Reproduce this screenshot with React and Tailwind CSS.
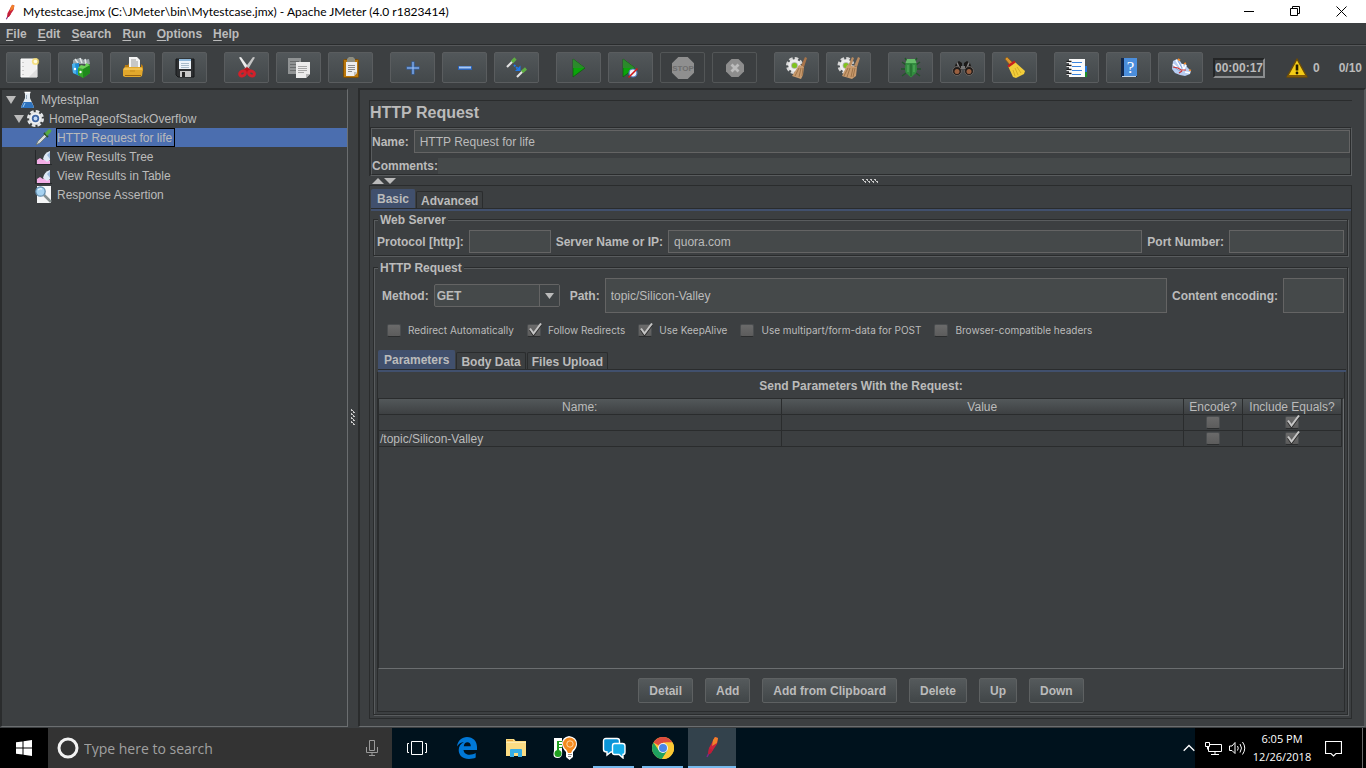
import { useState } from "react";
import clsx from "clsx";

const Svg = ({ w = 24, h = 24, children, ...rest }) => (
    <svg width={w} height={h} viewBox={`0 0 ${w} ${h}`} fill="none" className="shrink-0" aria-hidden="true" {...rest}>
        {children}
    </svg>
);

/* ---------- toolbar icons ---------- */

const NewIcon = () => (
    <Svg>
        <path d="M4 3h16v18H4z" fill="#f1f1f1" />
        <path d="M4 3h16v18H4z" stroke="#fff" />
        <path d="M6 6v1M6 10v1M6 14v1M6 18v1" stroke="#aaa" />
        <path d="M12 21l8-8v8z" fill="#dedede" />
        <circle cx="18.500" cy="5.500" r="3.600" fill="#f6dc6a" opacity=".8" />
        <circle cx="18.500" cy="5.500" r="1.800" fill="#fffbe0" />
    </Svg>
);

const TemplatesIcon = () => (
    <Svg>
        <path d="M4 4l7-2 4 2 5-1 1 5H4z" fill="#9aa4a8" />
        <path d="M6 3l3 4M11 2l2 5M16 3l1 5" stroke="#e4e7e8" strokeWidth="1.500" />
        <path d="M3 8l7-1v13l-6-3z" fill="#1d8fd6" />
        <path d="M3 8l3-1 1 11-3-1z" fill="#4fb4ee" />
        <path d="M9 12l5 1 7-4v8l-7 5-5-3z" fill="#36a82c" />
        <path d="M14 13l7-4v8l-7 5z" fill="#1f8a1c" />
        <path d="M9 12l3-3 4 1 1-3 4 2-7 4z" fill="#6bd356" />
        <circle cx="6" cy="13" r="1.200" fill="#fff" />
        <circle cx="11.500" cy="16" r="1.200" fill="#fff" />
    </Svg>
);

const OpenIcon = () => (
    <Svg>
        <path d="M8 1h8l3 3v8H8z" fill="#f4f4f4" />
        <path d="M10 4h5M10 6h7M10 8h7M10 10h7" stroke="#9a9a9a" />
        <path d="M4 9h3l1-2v5h12V8l2 2v5H3z" fill="#b77b12" />
        <path d="M2 13l2-2h17l1 2-1 7-2 1H4l-2-1z" fill="#e2a82c" />
        <path d="M3 13h18" stroke="#fbd574" />
        <path d="M4 19.500h16" stroke="#9b6510" />
        <path d="M9 15h5" stroke="#c58b1b" />
    </Svg>
);

const SaveIcon = () => (
    <Svg>
        <path d="M3 3h18v18H5l-2-2z" fill="#2d2f31" stroke="#17191a" />
        <path d="M6 3h12v10H6z" fill="#eef4fa" />
        <path d="M6 3h12v2H6z" fill="#8fb8da" />
        <path d="M8 7.500h8M8 9.500h8M8 11.500h8" stroke="#a9bccb" />
        <path d="M7 15h11v6H7z" fill="#c8c8c8" />
        <path d="M9 16h3v5H9z" fill="#252525" />
    </Svg>
);

const CutIcon = () => (
    <Svg>
        <path d="M4 1.500l2-.5 8.500 11.500-2.500 2.500z" fill="#ececec" />
        <path d="M20 1.500l-2-.5-8.500 11.500 2.500 2.500z" fill="#c4c4c4" />
        <path d="M9 13l3-2 3 2-1 4h-4z" fill="#b3161d" />
        <ellipse cx="7.500" cy="17.500" rx="3" ry="2.300" stroke="#d3202a" strokeWidth="3" transform="rotate(-30 7.500 17.500)" />
        <ellipse cx="16.500" cy="17.500" rx="3" ry="2.300" stroke="#d3202a" strokeWidth="3" transform="rotate(30 16.500 17.500)" />
    </Svg>
);

const CopyIcon = () => (
    <Svg>
        <path d="M1 2h13v16H1z" fill="#909394" />
        <path d="M3 5.500h9M3 8.500h9M3 11.500h9M3 14.500h9" stroke="#6a6d6e" />
        <path d="M9 6h14v12l-4 4H9z" fill="#ececec" />
        <path d="M11 10.500h9M11 12.500h9M11 14.500h9M11 16.500h6" stroke="#a6a6a6" />
        <path d="M23 18h-4v4z" fill="#b6b6b6" />
    </Svg>
);

const PasteIcon = () => (
    <Svg>
        <rect x="4.500" y="3.500" width="15" height="18" rx="1" fill="#b9770c" stroke="#7d4f07" />
        <path d="M7 6h11v11l-3 3H7z" fill="#ededed" />
        <path d="M9 9.500h7M9 11.500h7M9 13.500h7M9 15.500h4" stroke="#8c8c8c" />
        <path d="M18 16h-3v4z" fill="#bdbdbd" />
        <path d="M8 3l2-2h4l2 2v3H8z" fill="#8d8d80" />
    </Svg>
);

const PlusIcon = () => (
    <Svg>
        <path d="M12 5.500v13M5.500 12h13" stroke="#3267b4" strokeWidth="3" />
        <path d="M12 6v12M6 12h12" stroke="#a3c4f3" />
    </Svg>
);

const MinusIcon = () => (
    <Svg>
        <path d="M5 12h14" stroke="#2b62b5" strokeWidth="4" />
        <path d="M6 11.500h12" stroke="#a9c9f4" strokeWidth="2" />
    </Svg>
);

const ToggleIcon = () => (
    <Svg>
        <path d="M2 11l6-6" stroke="#e3e3e3" strokeWidth="2.200" />
        <path d="M7 6l3.500-3.500" stroke="#5fae42" strokeWidth="3.200" />
        <path d="M12 21l6-6" stroke="#e3e3e3" strokeWidth="2.200" />
        <path d="M17 16l4-3.500" stroke="#5fae42" strokeWidth="3" />
        <path d="M9 9l4 4" stroke="#1f78ea" strokeWidth="2" strokeDasharray="2 1" />
        <path d="M15.500 15h-5.500l5.500-5.500z" fill="#1f78ea" />
    </Svg>
);

const RunIcon = () => (
    <Svg>
        <path d="M6 3l12 9-12 9z" fill="#0aa50a" stroke="#115c11" strokeWidth=".8" />
        <path d="M6 3l12 9H6z" fill="#2b8a2b" />
    </Svg>
);

const RunNoPauseIcon = () => (
    <Svg>
        <path d="M4 3l12 9-12 9z" fill="#0aa50a" stroke="#115c11" strokeWidth=".8" />
        <path d="M4 3l12 9H4z" fill="#2b8a2b" />
        <circle cx="14" cy="17" r="4" fill="#eef2f8" stroke="#4d74b5" strokeWidth="1.200" />
        <path d="M9.500 21.500l9-9" stroke="#d01414" strokeWidth="1.600" />
    </Svg>
);

const StopIcon = () => (
    <Svg>
        <path d="M7.300 1h9.400L23 7.300v9.400L16.700 23H7.300L1 16.700V7.300z" fill="#8f8f8f" />
        <text x="12" y="15" textAnchor="middle" fontSize="8" fontWeight="bold" fontFamily="Liberation Sans Narrow, Liberation Sans, sans-serif" fill="#6e6e6e">
            STOP
        </text>
    </Svg>
);

const ShutdownIcon = () => (
    <Svg>
        <path d="M8.500 3h7L21 8.500v7L15.500 21h-7L3 15.500v-7z" fill="#8d8d8d" />
        <path d="M8.500 8.500l7 7M15.500 8.500l-7 7" stroke="#bcbcbc" strokeWidth="2.800" />
    </Svg>
);

const Cog = ({ cx, cy }) => (
    <>
        <circle cx={cx} cy={cy} r="7" stroke="#d8d8d8" strokeWidth="3" strokeDasharray="3.500 2" />
        <circle cx={cx} cy={cy} r="6.200" fill="#ededed" />
        <circle cx={cx} cy={cy} r="3.300" fill="#a9ada3" />
        <circle cx={cx} cy={cy} r="2.500" fill="#7fc41c" />
    </>
);

const ClearIcon = () => (
    <Svg>
        <Cog cx={9.5} cy={9.5} />
        <path d="M20 1l2 1-3 9-3-1z" fill="#a8744a" />
        <path d="M14 9l5 2-1 8-2 4-9-3z" fill="#c99b6e" />
        <path d="M14 12l-4 8M16 12l-2 9M18 12l-1 8" stroke="#8a6038" strokeWidth=".7" />
    </Svg>
);

const ClearAllIcon = () => (
    <Svg>
        <Cog cx={9} cy={9.5} />
        <path d="M15 1l2 1-3 9-3-1zM21 1l2 1-3 9-3-1z" fill="#b98c62" />
        <path d="M10 9l10 2-1 9-4 3-10-3z" fill="#c99b6e" />
        <path d="M11 12l-4 8M13 12l-3 9M16 12l-2 9M18 12l-2 9" stroke="#8a6038" strokeWidth=".7" />
    </Svg>
);

const BugIcon = () => (
    <Svg>
        <path d="M7 9L3 6M6 13H2M7 17l-4 3M17 9l4-3M18 13h4M17 17l4 3M8 5L6 2M16 5l2-3" stroke="#22552a" strokeWidth="1.400" />
        <path d="M7 6h10q2 7 0 11l-5 4.500L7 17q-2-4 0-11z" fill="#328c3f" />
        <path d="M8 3h8l1.500 4h-11z" fill="#66bd6a" />
        <path d="M12 8v12" stroke="#1c5f28" />
        <path d="M9 9v7M15 9v7" stroke="#58b263" />
    </Svg>
);

const SearchIcon = () => (
    <Svg>
        <path d="M5 7l3-2 3 2v9H2zM19 7l-3-2-3 2v9h9z" fill="#1c1a19" />
        <path d="M6 6.500l2 5M18 6.500l-2 5" stroke="#858585" strokeWidth="1.500" />
        <circle cx="6" cy="15" r="4.500" fill="#201c1a" stroke="#6a6562" />
        <circle cx="18" cy="15" r="4.500" fill="#201c1a" stroke="#6a6562" />
        <circle cx="6" cy="15.500" r="2.500" fill="#9a6040" />
        <circle cx="18" cy="15.500" r="2.500" fill="#9a6040" />
        <path d="M10 10h4v3h-4z" fill="#777" />
    </Svg>
);

const BroomIcon = () => (
    <Svg>
        <path d="M2 3l2-2 6 6-3 2z" fill="#d9952f" stroke="#8c5a12" strokeWidth=".7" />
        <path d="M12 6l10 9-1 3-8 4-3-1L5 10z" fill="#f2cd3a" />
        <path d="M14 11l4 6M12 12l3 7M10 14l2 6" stroke="#d1a822" strokeWidth=".9" />
        <path d="M5 10.500l7-5" stroke="#c8211d" strokeWidth="2.500" />
    </Svg>
);

const FunctionIcon = () => (
    <Svg>
        <path d="M18 10h4v6h-4z" fill="#2277dd" />
        <path d="M18 16h4v5h-4z" fill="#18902a" />
        <path d="M4 3h16v18H4z" fill="#fbfbfb" />
        <path d="M7 6.500h10M7 10.500h9M7 14.500h10M7 18.500h9" stroke="#3b84dd" />
        <path d="M1.500 5.500h5M1.500 9.500h5M1.500 13.500h5M1.500 17.500h5" stroke="#1a1a1a" strokeWidth="1.300" />
        <path d="M1.500 6.500h4M1.500 10.500h4M1.500 14.500h4M1.500 18.500h4" stroke="#e5e5e5" />
    </Svg>
);

const HelpIcon = () => (
    <Svg>
        <path d="M4 2h16v19H4z" fill="#12284c" />
        <path d="M7 2h13v18H7z" fill="#4b8edc" />
        <path d="M5 20h14v1H5z" fill="#c7d4e3" />
        <text x="13.500" y="17" textAnchor="middle" fontSize="17" fontFamily="Liberation Serif, serif" fill="#fff">
            ?
        </text>
    </Svg>
);

const FeatherWingIcon = () => (
    <Svg>
        <path d="M4 5l4-2 3 2 2 3 4 0 1 3 4 4-1 3-5 2-5-1-5-2-3-4z" fill="#b7cdf2" />
        <path d="M7 4l5 8M4 8l7 6M13 8l2 6M17 9l-3 6M16 16l5 1" stroke="#fff" strokeWidth="1.500" />
        <path d="M9 5l4 7M5 11l6 4" stroke="#7d9bd2" strokeWidth=".9" />
        <path d="M4 11l5 1 3 2 5 0M10 17l3-2" stroke="#cc3333" strokeWidth="1.200" />
        <path d="M9 3l2 1.500M15 8l2-1M20 14l2 .5" stroke="#f08a2a" strokeWidth="1.800" />
    </Svg>
);

const WarningIcon = () => (
    <Svg w={22} h={20}>
        <path d="M11 1l10 18H1z" fill="#f3cc17" stroke="#6b4b06" strokeWidth="1.500" strokeLinejoin="round" />
        <path d="M2 17h18l1 2H1z" fill="#80590a" />
        <path d="M11 6.500v6" stroke="#221a00" strokeWidth="2.600" />
        <circle cx="11" cy="15" r="1.400" fill="#221a00" />
    </Svg>
);

/* ---------- tree icons ---------- */

const FlaskIcon = () => (
    <Svg w={17} h={19}>
        <path d="M6 3h5v5l4 9q0 1-2 1H4q-2 0-2-1l4-9z" fill="#e3ebf3" />
        <path d="M4.500 12h8l2.500 5q0 1-2 1H4q-2 0-2-1z" fill="#2d72bd" />
        <path d="M6 13l-2 4" stroke="#9ed0f7" />
        <path d="M5.500 2.500h6" stroke="#fff" strokeWidth="1.500" />
        <path d="M7.500 5v4" stroke="#94a7b8" />
    </Svg>
);

const GearIcon = () => (
    <Svg w={17} h={19}>
        <circle cx="8.500" cy="9.500" r="7" stroke="#e6e8ea" strokeWidth="3" strokeDasharray="3.500 2" />
        <circle cx="8.500" cy="9.500" r="6" fill="#f0f1f2" stroke="#d8dadc" />
        <circle cx="8.500" cy="9.500" r="3.700" fill="#3e64a2" />
        <circle cx="8.500" cy="9.500" r="1.900" fill="#c4d9f5" />
    </Svg>
);

const SamplerIcon = () => (
    <Svg w={17} h={19}>
        <path d="M1 17l2-4 7-7 2 2-7 7z" fill="#d7dbd8" stroke="#5f6a60" strokeWidth=".7" />
        <path d="M9 5l4 4" stroke="#2d4f24" strokeWidth="1.800" />
        <path d="M10 5l4-4 2.500 1-.5 2-4 4z" fill="#56a940" />
    </Svg>
);

const ListenerIcon = () => (
    <Svg w={17} h={19}>
        <path d="M.5 3v14.500H17" stroke="#26282a" />
        <path d="M2 17v-4l3-2 3 2 3-2 4 3v3z" fill="#f3aee6" />
        <path d="M8 12q1-6 7-8v9l-3 2z" fill="#dfe9f5" />
        <path d="M12 8l3-3v7z" fill="#9eb9dc" />
    </Svg>
);

const AssertionIcon = () => (
    <Svg w={17} h={19}>
        <path d="M2 1h14v17H2z" fill="#f5f6f7" />
        <path d="M9 10l7 7" stroke="#86908f" strokeWidth="2.500" />
        <circle cx="5.500" cy="6.500" r="4.700" fill="#a6d2f0" stroke="#628cab" strokeWidth="1.200" />
        <path d="M3 5q2-2 4-1" stroke="#f2faff" />
    </Svg>
);

const Caret = ({ up, w = 10, h = 8 }) => (
    <Svg w={w} h={h}>
        <path d={up ? `M0 ${h}L${w / 2} 0L${w} ${h}z` : `M0 0H${w}L${w / 2} ${h}z`} fill="#bbbbbb" />
    </Svg>
);

const Feather = ({ w = 16, h = 22 }) => (
    <svg width={w} height={h} viewBox="0 0 16 22" fill="none" className="shrink-0" aria-hidden="true">
        <path d="M11 1l3 1-1 6-6 9-3 2 1-7z" fill="#c9233c" />
        <path d="M11 1l3 1-1 5-5 3 1-6z" fill="#f0812a" />
        <path d="M5 12l4 2-2 3-3 2z" fill="#c01c38" />
        <path d="M3 21l1.500-3" stroke="#7a2a88" strokeWidth="1.500" />
    </svg>
);

/* ---------- taskbar icons ---------- */

const WindowsIcon = () => (
    <Svg w={18} h={18}>
        <path d="M1 3.300l6.500-.9v6H1zM8.500 2.200L17 1v7.400H8.500zM1 9.600h6.500v6L1 14.700zM8.500 9.600H17V17l-8.500-1.200z" fill="#fff" />
    </Svg>
);

const TaskViewIcon = () => (
    <Svg w={22} h={16}>
        <path d="M5.500 1.500h11v13h-11zM3 3.500H1.500v9H3M19 3.500h1.500v9H19" stroke="#fff" />
    </Svg>
);

const EdgeIcon = () => (
    <Svg w={22} h={24}>
        <path
            d="M1 10.500C1.800 4.500 6 1 11 1c6 0 10 4.300 10 10v3H7.500c.3 3.200 3 4.700 6 4.700 2.400 0 4.600-.7 6.200-1.600v4.500C18 22.600 15.600 23 13 23 6.500 23 2.700 19.200 2.700 14c0-3.600 2-6.500 5.200-8C5.200 6.300 2.600 7.800 1 10.500zm6.800-.3h7c0-2.600-1.300-4-3.400-4-2 0-3.300 1.600-3.600 4z"
            fill="#0078d7"
        />
    </Svg>
);

const ExplorerIcon = () => (
    <Svg w={22} h={20}>
        <path d="M1 1h8l1.500 2H21v15H1z" fill="#fbdc83" />
        <path d="M2 2.500h6" stroke="#e8a33d" />
        <path d="M1 4.500h20" stroke="#fdeab3" />
        <path d="M5 12q0-1 1-1h10q1 0 1 1v7h-4v-4H9v4H5z" fill="#36aee6" />
    </Svg>
);

const WeatherIcon = () => (
    <Svg w={24} h={24}>
        <path d="M1 2h8v13q1 7-4.500 7T1 15z" fill="#fff" />
        <circle cx="5" cy="17.500" r="3.500" fill="#1fa01f" />
        <path d="M5 5v12" stroke="#1fa01f" strokeWidth="2" />
        <path d="M6 5.500h3M6 8.500h3M6 11.500h3" stroke="#1fa01f" />
        <path d="M16 0q8 1 8 8 0 4-4 8v5l-3.500 3L13 21v-5q-4-4-4-8 0-7 7-8z" fill="#fff" />
        <circle cx="16.500" cy="8" r="6.500" fill="#f58a1f" />
        <path d="M13 13h7l-2 4h-3z" fill="#f58a1f" />
        <circle cx="17" cy="8" r="3.200" stroke="#ffd9a8" />
        <path d="M15 18.500h4M15 20.500h3" stroke="#888" />
    </Svg>
);

const ChatIcon = () => (
    <Svg w={24} h={22}>
        <path d="M4 1.500h11q2.500 0 2.500 2.500v9q0 2-2.500 2H9l-4 3v-3q-3.500 0-3.500-2.500V4Q1.500 1.500 4 1.500z" fill="#0a93d6" stroke="#fff" strokeWidth="1.400" />
        <path d="M12.500 6.500h8q2.500 0 2.500 2.500v6q0 2.500-2 2.500v3.500l-4-3.500h-4.500q-2 0-2-2V9q0-2.500 2-2.500z" fill="#18aee8" stroke="#fff" strokeWidth="1.400" />
    </Svg>
);

const ChromeIcon = () => (
    <Svg w={22} h={22}>
        <circle cx="11" cy="11" r="11" fill="#fbc834" />
        <path d="M11 11L1.500 5.500A11 11 0 0 1 20.500 5.500H11z" fill="#dd4b3e" />
        <path d="M1.500 5.500A11 11 0 0 0 10 22l5.500-8.500L11 11 6.500 13z" fill="#1ea15f" />
        <path d="M20.500 5.500A11 11 0 0 1 10 22l5.500-8.500q1-4-2-8z" fill="#fbc834" />
        <circle cx="11" cy="11" r="5" fill="#f3f3f3" />
        <circle cx="11" cy="11" r="4" fill="#4a86e8" />
    </Svg>
);

/* ---------- data ---------- */

const MENUS = ["File", "Edit", "Search", "Run", "Options", "Help"];

const TOOLBAR = [
    [
        ["New", NewIcon],
        ["Templates", TemplatesIcon],
        ["Open", OpenIcon],
        ["Save", SaveIcon],
    ],
    [
        ["Cut", CutIcon],
        ["Copy", CopyIcon],
        ["Paste", PasteIcon],
    ],
    [
        ["Expand All", PlusIcon],
        ["Collapse All", MinusIcon],
        ["Toggle", ToggleIcon],
    ],
    [
        ["Start", RunIcon],
        ["Start no pauses", RunNoPauseIcon],
        ["Stop", StopIcon, true],
        ["Shutdown", ShutdownIcon, true],
    ],
    [
        ["Clear", ClearIcon],
        ["Clear All", ClearAllIcon],
    ],
    [
        ["Debug", BugIcon],
        ["Search", SearchIcon],
        ["Reset Search", BroomIcon],
    ],
    [
        ["Function Helper", FunctionIcon],
        ["Help", HelpIcon],
        ["What's new", FeatherWingIcon],
    ],
];

const TREE = [
    { label: "Mytestplan", icon: FlaskIcon, pad: "pl-[4px]", open: true },
    { label: "HomePageofStackOverflow", icon: GearIcon, pad: "pl-[12px]", open: true },
    { label: "HTTP Request for life", icon: SamplerIcon, pad: "pl-[20px]" },
    { label: "View Results Tree", icon: ListenerIcon, pad: "pl-[20px]" },
    { label: "View Results in Table", icon: ListenerIcon, pad: "pl-[20px]" },
    { label: "Response Assertion", icon: AssertionIcon, pad: "pl-[20px]" },
];

const OPTIONS = [
    ["Redirect Automatically", false],
    ["Follow Redirects", true],
    ["Use KeepAlive", true],
    ["Use multipart/form-data for POST", false],
    ["Browser-compatible headers", false],
];

const ROWS = [
    { name: "", value: "" },
    { name: "/topic/Silicon-Valley", value: "" },
];

/* ---------- controls ---------- */

function Check({ label, checked }) {
    const [on, setOn] = useState(checked);
    return (
        <span className="grid shrink-0">
            <input
                type="checkbox"
                aria-label={label}
                checked={on}
                onChange={() => setOn(!on)}
                className="col-start-1 row-start-1 mt-px h-[13px] w-[14px] appearance-none rounded-xs border border-[#4b4e50] border-b-[#2b2d2e] bg-linear-to-b from-[#6a6a6a] to-[#5c5c5c]"
            />
            <svg width="16" height="14" viewBox="0 0 16 14" fill="none" className="pointer-events-none col-start-1 row-start-1" aria-hidden="true">
                {on && (
                    <>
                        <path d="M3 7l3.500 5L14 2" stroke="#2a2a2a" strokeWidth="2" />
                        <path d="M3 5.500l3.500 5L14 .5" stroke="#c4c4c4" strokeWidth="2" />
                    </>
                )}
            </svg>
        </span>
    );
}

function Field({ id, label, value = "", className, height = "h-[23px]" }) {
    return (
        <>
            <label htmlFor={id} className="shrink-0 font-bold">
                {label}
            </label>
            <input id={id} defaultValue={value} className={clsx("min-w-0 border border-[#646464] bg-[#45494a] px-[5px] outline-none", height, className)} />
        </>
    );
}

function Tabs({ items }) {
    const [active, setActive] = useState(0);
    return (
        <div>
            <div role="tablist" className="flex h-[19px] items-end gap-px">
                {items.map((item, i) => (
                    <button
                        key={item}
                        role="tab"
                        aria-selected={i === active}
                        onClick={() => setActive(i)}
                        className={clsx(
                            "rounded-t-xs border border-b-0 font-bold",
                            i === active ? "h-[19px] border-[#41506d] bg-[#41506d] px-[5px]" : "h-[17px] border-[#2a2c2d] px-[4px] pt-px"
                        )}
                    >
                        {item}
                    </button>
                ))}
            </div>
            <div className="border-t border-[#2a2c2d]">
                <div className="h-[2px] bg-[#41506d]" />
            </div>
        </div>
    );
}

/* etched frame: dark line with a light one below and to the right of it */
const Group = ({ title, className, children }) => (
    <fieldset className={clsx("border border-[#2a2c2d] pl-px shadow-[inset_1px_1px_0_#595c5e,1px_1px_0_#595c5e]", className)}>
        <legend className="ml-[3px] h-[16px] bg-[#3c3f41] px-[2px] leading-[18px] font-bold">{title}</legend>
        {children}
    </fieldset>
);

const PushButton = ({ children }) => (
    <button className="h-[25px] rounded-xs border border-[#5e6162] bg-linear-to-b from-[#555a5c] to-[#414648] px-[10px] font-bold">{children}</button>
);

/* ---------- page parts ---------- */

function TitleBar() {
    return (
        <header className="flex h-[23px] items-center bg-white text-black">
            <span className="flex w-[23px] justify-center pr-[3px]">
                <Feather w={12} h={16} />
            </span>
            <h1 className="flex-1 truncate font-[Lato,sans-serif] text-[12px]">
                Mytestcase.jmx (C:\JMeter\bin\Mytestcase.jmx) - Apache JMeter (4.0 r1823414)
            </h1>
            <div className="flex items-center pr-[2px]">
                <button aria-label="Minimize" className="flex w-[46px] justify-center">
                    <Svg w={11} h={11}>
                        <path d="M0 5.500h10" stroke="#000" />
                    </Svg>
                </button>
                <button aria-label="Restore" className="flex w-[46px] justify-center">
                    <Svg w={11} h={11}>
                        <path d="M.5 2.500h7v7h-7zM2.500 2V.500h7v7H8" stroke="#000" />
                    </Svg>
                </button>
                <button aria-label="Close" className="flex w-[46px] justify-center">
                    <Svg w={11} h={11}>
                        <path d="M.5.5l10 10M10.500.5l-10 10" stroke="#000" />
                    </Svg>
                </button>
            </div>
        </header>
    );
}

function MenuBar() {
    return (
        <nav className="flex h-[22px] items-center gap-[11px] border-b border-[#2a2c2d] pl-[6px]">
            {MENUS.map((m) => (
                <button key={m} className="font-bold">
                    <span className="underline underline-offset-2">{m[0]}</span>
                    {m.slice(1)}
                </button>
            ))}
        </nav>
    );
}

function Toolbar() {
    return (
        <div className="flex items-center border-t border-[#555759] pt-[6px] pr-[4px] pb-[5px] pl-[6px]">
            <div className="mr-[10px] flex shrink-0 gap-[17px]">
                {TOOLBAR.map((group, i) => (
                    <div key={i} className="flex gap-[7px]">
                        {group.map(([label, Icon, off]) => (
                            <button
                                key={label}
                                aria-label={label}
                                disabled={off}
                                className={clsx(
                                    "flex h-[31px] w-[45px] items-center justify-center rounded-xs border",
                                    off ? "border-[#535657]" : "border-[#5a5d5f] bg-linear-to-b from-[#52575a] to-[#43484a]"
                                )}
                            >
                                <Icon />
                            </button>
                        ))}
                    </div>
                ))}
            </div>
            <span className="border-2 border-t-[#232526] border-r-[#8a8d8f] border-b-[#8a8d8f] border-l-[#232526] font-bold">00:00:17</span>
            <span className="ml-[21px] flex items-center gap-[5px] font-bold">
                <WarningIcon />0
            </span>
            <span className="ml-auto font-bold">0/10</span>
        </div>
    );
}

function Tree() {
    const [selected, setSelected] = useState(2);
    return (
        <aside className="w-[348px] shrink-0 border-t-2 border-r border-b border-l-2 border-t-[#2a2c2d] border-r-[#6b6e70] border-b-[#6b6e70] border-l-[#2a2c2d]">
            <ul role="tree">
                {TREE.map(({ label, icon: Icon, pad, open }, i) => (
                    <li
                        key={label}
                        role="treeitem"
                        aria-selected={i === selected}
                        onClick={() => setSelected(i)}
                        className={clsx("flex h-[19px] items-center", pad, i === selected && "bg-[#4b6eaf]")}
                    >
                        <span className="mr-[3px] w-[10px]">{open && <Caret />}</span>
                        <Icon />
                        <span className={clsx("ml-[4px] flex h-[19px] items-center border pr-[2px]", i === selected ? "border-black" : "border-transparent")}>
                            {label}
                        </span>
                    </li>
                ))}
            </ul>
        </aside>
    );
}

function ParameterTable() {
    return (
        <div className="flex-1 border border-t-[#2a2c2d] border-r-[#6b6e70] border-b-[#6b6e70] border-l-[#2a2c2d] pr-px">
            <table className="w-full table-fixed border-separate border-spacing-0">
                <thead>
                    <tr className="h-[16px] bg-linear-to-b from-[#53585a] to-[#3c3f41]">
                        <th className="border-r border-b border-[#2a2c2d] p-0 pt-[2px] leading-[13px] font-normal">Name:</th>
                        <th className="border-r border-b border-[#2a2c2d] p-0 pt-[2px] leading-[13px] font-normal">Value</th>
                        <th className="w-[59px] border-r border-b border-[#2a2c2d] p-0 pt-[2px] leading-[13px] font-normal">Encode?</th>
                        <th className="w-[99px] border-r border-b border-[#2a2c2d] p-0 pt-[2px] leading-[13px] font-normal">Include Equals?</th>
                    </tr>
                </thead>
                <tbody>
                    {ROWS.map((row, i) => (
                        <tr key={i} className="h-[16px]">
                            <td className="border-r border-b border-[#2a2c2d] p-0 pt-[2px] pl-px leading-[13px]">{row.name}</td>
                            <td className="border-r border-b border-[#2a2c2d] p-0 pt-[2px] pl-px leading-[13px]">{row.value}</td>
                            <td className="border-r border-b border-[#2a2c2d] p-0 align-top">
                                <span className="flex justify-center pl-[2px]">
                                    <Check label="Encode" checked={false} />
                                </span>
                            </td>
                            <td className="border-r border-b border-[#2a2c2d] p-0 align-top">
                                <span className="flex justify-center pl-[2px]">
                                    <Check label="Include equals" checked />
                                </span>
                            </td>
                        </tr>
                    ))}
                </tbody>
            </table>
        </div>
    );
}

function RequestPanel() {
    return (
        <main className="flex min-w-0 flex-1 flex-col border-t-2 border-r-2 border-b border-l-2 border-t-[#2a2c2d] border-r-[#55585a] border-b-[#6b6e70] border-l-[#2a2c2d] pt-[10px] pr-[12px] pb-[7px] pl-[9px]">
            <section className="border-t border-l border-[#2a2c2d]">
                <h2 className="h-[26px] text-[16px] leading-[24px] font-bold">HTTP Request</h2>
                <div className="border border-t-[#2a2c2d] border-r-[#595c5e] border-b-[#595c5e] border-l-[#2a2c2d]">
                    <div className="flex flex-col gap-[5px] border border-t-[#595c5e] border-r-[#2a2c2d] border-b-[#2a2c2d] border-l-[#595c5e] pt-px">
                        <div className="flex items-center gap-[5px]">
                            <Field id="name" label="Name:" value="HTTP Request for life" className="flex-1" />
                        </div>
                        <div className="flex h-[16px] items-center">
                            <label htmlFor="comments" className="font-bold">
                                Comments:
                            </label>
                            <input id="comments" className="h-[16px] min-w-0 flex-1 bg-[#45494a] outline-none" />
                        </div>
                    </div>
                </div>
            </section>
            <div className="flex h-[9px] items-center pl-[3px]">
                <Caret up w={12} h={6} />
                <Caret w={12} h={6} />
                <span className="flex flex-1 justify-center pr-[8px]">
                    <Svg w={16} h={4}>
                        <path d="M0 .5h14M2 2.500h14" stroke="#c8c8c8" strokeDasharray="2 2" />
                        <path d="M1 1.500h14M3 3.500h13" stroke="#c8c8c8" strokeDasharray="1 3" />
                    </Svg>
                </span>
            </div>
            <section className="flex flex-1 flex-col border border-[#2a2c2d] pt-[3px] pb-[3px]">
                <div className="pl-px">
                    <Tabs items={["Basic", "Advanced"]} />
                </div>
                <div className="flex flex-1 flex-col gap-[3px] pr-[3px] pl-[3px]">
                    <Group title="Web Server" className="pt-[3px] pb-[2px]">
                        <div className="flex items-center gap-[5px] pr-[3px] pl-[2px]">
                            <Field id="protocol" label="Protocol [http]:" className="w-[82px]" />
                            <Field id="server" label="Server Name or IP:" value="quora.com" className="flex-1" />
                            <Field id="port" label="Port Number:" className="w-[115px]" />
                        </div>
                    </Group>
                    <Group title="HTTP Request" className="flex flex-1 flex-col pt-[3px] pb-[2px]">
                        <div className="flex items-center gap-[5px] pr-[3px] pl-[7px]">
                            <label htmlFor="method" className="font-bold">
                                Method:
                            </label>
                            <span className="mr-[5px] grid">
                                <select
                                    id="method"
                                    className="col-start-1 row-start-1 h-[23px] w-[126px] appearance-none rounded-xs border border-[#646464] bg-[#45494a] px-[2px] font-bold outline-none"
                                >
                                    <option>GET</option>
                                    <option>POST</option>
                                    <option>PUT</option>
                                </select>
                                <span className="pointer-events-none col-start-1 row-start-1 my-px mr-px flex w-[20px] items-center justify-center justify-self-end border-l border-[#646464] bg-[#3f4345]">
                                    <Caret w={9} h={6} />
                                </span>
                            </span>
                            <Field id="path" label="Path:" value="topic/Silicon-Valley" height="h-[35px]" className="flex-1" />
                            <Field id="encoding" label="Content encoding:" height="h-[35px]" className="w-[61px]" />
                        </div>
                        <div className="mt-[9px] flex h-[16px] items-center gap-[13px] pl-[12px] font-[Inter,sans-serif] text-[10px]">
                            {OPTIONS.map(([label, checked]) => (
                                <label key={label} className="flex items-center gap-[5px]">
                                    <Check checked={checked} label={label} />
                                    {label}
                                </label>
                            ))}
                        </div>
                        <div className="mt-[12px] flex flex-1 flex-col pl-[2px]">
                            <div className="pr-px pl-px">
                                <Tabs items={["Parameters", "Body Data", "Files Upload"]} />
                            </div>
                            <div className="mr-[2px] flex flex-1 flex-col border-r border-b border-l border-[#2a2c2d]">
                                <h3 className="h-[26px] text-center leading-[28px] font-bold">Send Parameters With the Request:</h3>
                                <ParameterTable />
                                <div className="flex justify-center gap-[12px] pt-[9px] pb-[8px]">
                                    {["Detail", "Add", "Add from Clipboard", "Delete", "Up", "Down"].map((b) => (
                                        <PushButton key={b}>{b}</PushButton>
                                    ))}
                                </div>
                            </div>
                        </div>
                    </Group>
                </div>
            </section>
        </main>
    );
}

const TaskButton = ({ label, running, children }) => (
    <button aria-label={label} className="flex h-[40px] w-[49px] items-center justify-center px-[4px]">
        <span className={clsx("flex h-[40px] flex-1 items-center justify-center", running && "border-b-2 border-[#76b9ed] pt-[2px]")}>{children}</span>
    </button>
);

function Taskbar() {
    return (
        <footer className="flex h-[40px] items-center bg-[#00121d] font-['Open_Sans',sans-serif] text-white">
            <button aria-label="Start" className="flex h-[40px] w-[48px] items-center justify-center bg-black">
                <WindowsIcon />
            </button>
            <label className="flex h-[40px] w-[344px] items-center bg-[#333333] pl-[8px]">
                <Svg w={24} h={24}>
                    <circle cx="12" cy="12" r="9" stroke="#f2f2f2" strokeWidth="3" />
                </Svg>
                <input
                    aria-label="Search"
                    placeholder="Type here to search"
                    className="ml-[4px] min-w-0 flex-1 pt-[2px] text-[14px] outline-none placeholder:text-[#a0a0a0]"
                />
                <span className="mr-[14px]">
                    <Svg w={12} h={18}>
                        <path d="M3.500 1.500h5v10h-5zM.5 8v5.500h11V8M6 14v2.500M3 16.500h6" stroke="#9a9a9a" />
                    </Svg>
                </span>
            </label>
            <TaskButton label="Task View">
                <TaskViewIcon />
            </TaskButton>
            <div className="ml-px flex">
                <TaskButton label="Edge">
                    <EdgeIcon />
                </TaskButton>
                <TaskButton label="File Explorer">
                    <ExplorerIcon />
                </TaskButton>
                <TaskButton label="Weather">
                    <WeatherIcon />
                </TaskButton>
                <TaskButton label="Chat" running>
                    <ChatIcon />
                </TaskButton>
                <TaskButton label="Chrome" running>
                    <ChromeIcon />
                </TaskButton>
                <button aria-label="JMeter" className="ml-px flex h-[40px] w-[48px] items-center justify-center border-b-2 border-[#76b9ed] bg-[#33424c]">
                    <Feather />
                </button>
            </div>
            <button aria-label="Show hidden icons" className="ml-auto">
                <Svg w={12} h={8}>
                    <path d="M.7 6.800L6 1.500l5.300 5.300" stroke="#fff" strokeWidth="1.300" />
                </Svg>
            </button>
            <div className="flex h-[40px] items-center bg-black pl-[10px]">
                <Svg w={17} h={14}>
                    <path d="M5 3.500h11.500v7H3.500V6M10 11v2M6 13.500h8M.5 1.500h4v4h-4zM2.500 5.500v3" stroke="#fff" />
                </Svg>
                <span className="ml-[7px]">
                    <Svg w={17} h={14}>
                        <path d="M.5 5h2.500l3-3.500v11L3 9.500H.5zM8.500 5q1.500 2 0 4.500M11 3q3 4 0 8.500M13.500 1q4.500 6 0 12.500" stroke="#fff" />
                    </Svg>
                </span>
                <div className="ml-[6px] w-[60px] text-center text-[11px] leading-[18px] whitespace-nowrap">
                    <div>6:05 PM</div>
                    <div>12/26/2018</div>
                </div>
                <button aria-label="Notifications" className="mr-[20px] ml-[13px]">
                    <Svg w={17} h={17}>
                        <path d="M.5 1.500h16v12H11l-2.500 2.500L6 13.500H.5z" stroke="#fff" strokeWidth="1.200" />
                    </Svg>
                </button>
                <span className="mr-[3px] h-[40px] w-px bg-[#6b6b6b]" />
            </div>
        </footer>
    );
}

export default function App() {
    return (
        <div className="flex min-h-screen flex-col bg-[#3c3f41] font-['Liberation_Sans',Arial,sans-serif] text-[12px] leading-[16px] text-[#bbbbbb]">
            <TitleBar />
            <MenuBar />
            <Toolbar />
            <div className="flex flex-1 pb-px">
                <Tree />
                <div className="flex w-[10px] shrink-0 items-center justify-center pt-[18px]">
                    <Svg w={4} h={16}>
                        <path d="M.5 0v14M2.500 2v14" stroke="#c8c8c8" strokeDasharray="2 2" />
                        <path d="M1.500 1v14M3.500 3v13" stroke="#c8c8c8" strokeDasharray="1 3" />
                    </Svg>
                </div>
                <RequestPanel />
            </div>
            <Taskbar />
        </div>
    );
}
